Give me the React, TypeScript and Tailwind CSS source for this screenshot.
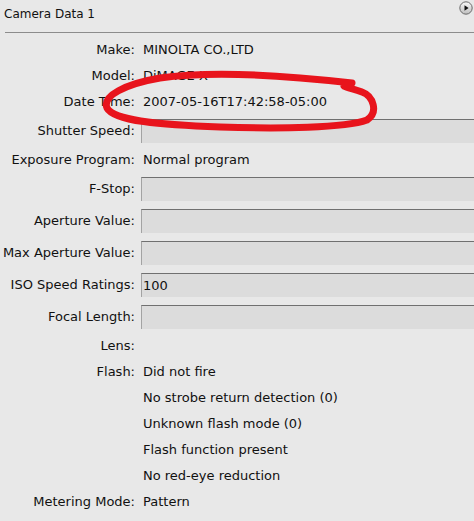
import React from "react";

type Row = {
  label?: string;
  value?: string;
  field?: boolean;
};

const rows: Row[] = [
  { label: "Make", value: "MINOLTA CO.,LTD" },
  { label: "Model", value: "DiMAGE X" },
  { label: "Date Time", value: "2007-05-16T17:42:58-05:00" },
  { label: "Shutter Speed", field: true },
  { label: "Exposure Program", value: "Normal program" },
  { label: "F-Stop", field: true },
  { label: "Aperture Value", field: true },
  { label: "Max Aperture Value", field: true },
  { label: "ISO Speed Ratings", value: "100", field: true },
  { label: "Focal Length", field: true },
  { label: "Lens", value: "" },
  { label: "Flash", value: "Did not fire" },
  { value: "No strobe return detection (0)" },
  { value: "Unknown flash mode (0)" },
  { value: "Flash function present" },
  { value: "No red-eye reduction" },
  { label: "Metering Mode", value: "Pattern" },
];

function MenuButton() {
  return (
    <svg width="14" height="14" viewBox="0 0 14 14">
      <defs>
        <linearGradient id="btn" x1="0" y1="0" x2="0" y2="1">
          <stop offset="0" stopColor="#fafafa" />
          <stop offset="1" stopColor="#bdbdbd" />
        </linearGradient>
      </defs>
      <circle cx="7" cy="7" r="6.2" fill="url(#btn)" stroke="#6a6a6a" strokeWidth="1" />
      <path d="M5.5 4.2 L9.6 7 L5.5 9.8 Z" fill="#111" />
    </svg>
  );
}

export default function App() {
  return (
    <div
      className="relative w-[474px] h-[521px] overflow-hidden bg-[#e8e8e8] text-[#111] text-[13px]"
      style={{ fontFamily: '"DejaVu Sans", "Liberation Sans", sans-serif' }}
    >
      {/* Header */}
      <div className="h-[32px] flex justify-between pl-[4px] pr-[1px]">
        <span className="mt-[7px] text-[12px] leading-[14px]">Camera Data 1</span>
        <div className="mt-[1px]">
          <MenuButton />
        </div>
      </div>
      <div className="ml-[5px] h-px bg-[#8c8c8c]" />

      {/* Rows */}
      <div className="pt-[4px] flex flex-col">
        {rows.map((r, i) => (
          <div key={i} className={`flex items-center ${r.field ? "h-[32px]" : "h-[26px]"}`}>
            <div className="w-[136px] shrink-0 text-right pr-px whitespace-nowrap">
              {r.label ? `${r.label}:` : ""}
            </div>
            {r.field ? (
              <div className="ml-[5px] flex-1 h-[24px] flex items-center bg-[#dcdcdc] border-t border-t-[#707070] border-l border-l-[#a3a3a3] pl-[1px]">
                {r.value}
              </div>
            ) : (
              <div className="ml-[5px] pl-[2px] flex-1 whitespace-nowrap">{r.value}</div>
            )}
          </div>
        ))}
      </div>

      {/* Red hand-drawn circle */}
      <svg
        className="absolute inset-0 pointer-events-none"
        width="474"
        height="521"
        viewBox="0 0 474 521"
      >
        <path
          d="M352 83 C 300 77, 215 70, 160 78 C 125 84, 102 96, 107 108 C 114 121, 160 125, 220 127 C 280 129, 345 128, 367 120 C 379 112, 373 96, 362 92 C 355 89, 348 88, 344 86"
          fill="none"
          stroke="#e8141c"
          strokeWidth="7"
          strokeLinecap="round"
          strokeLinejoin="round"
        />
      </svg>
    </div>
  );
}
